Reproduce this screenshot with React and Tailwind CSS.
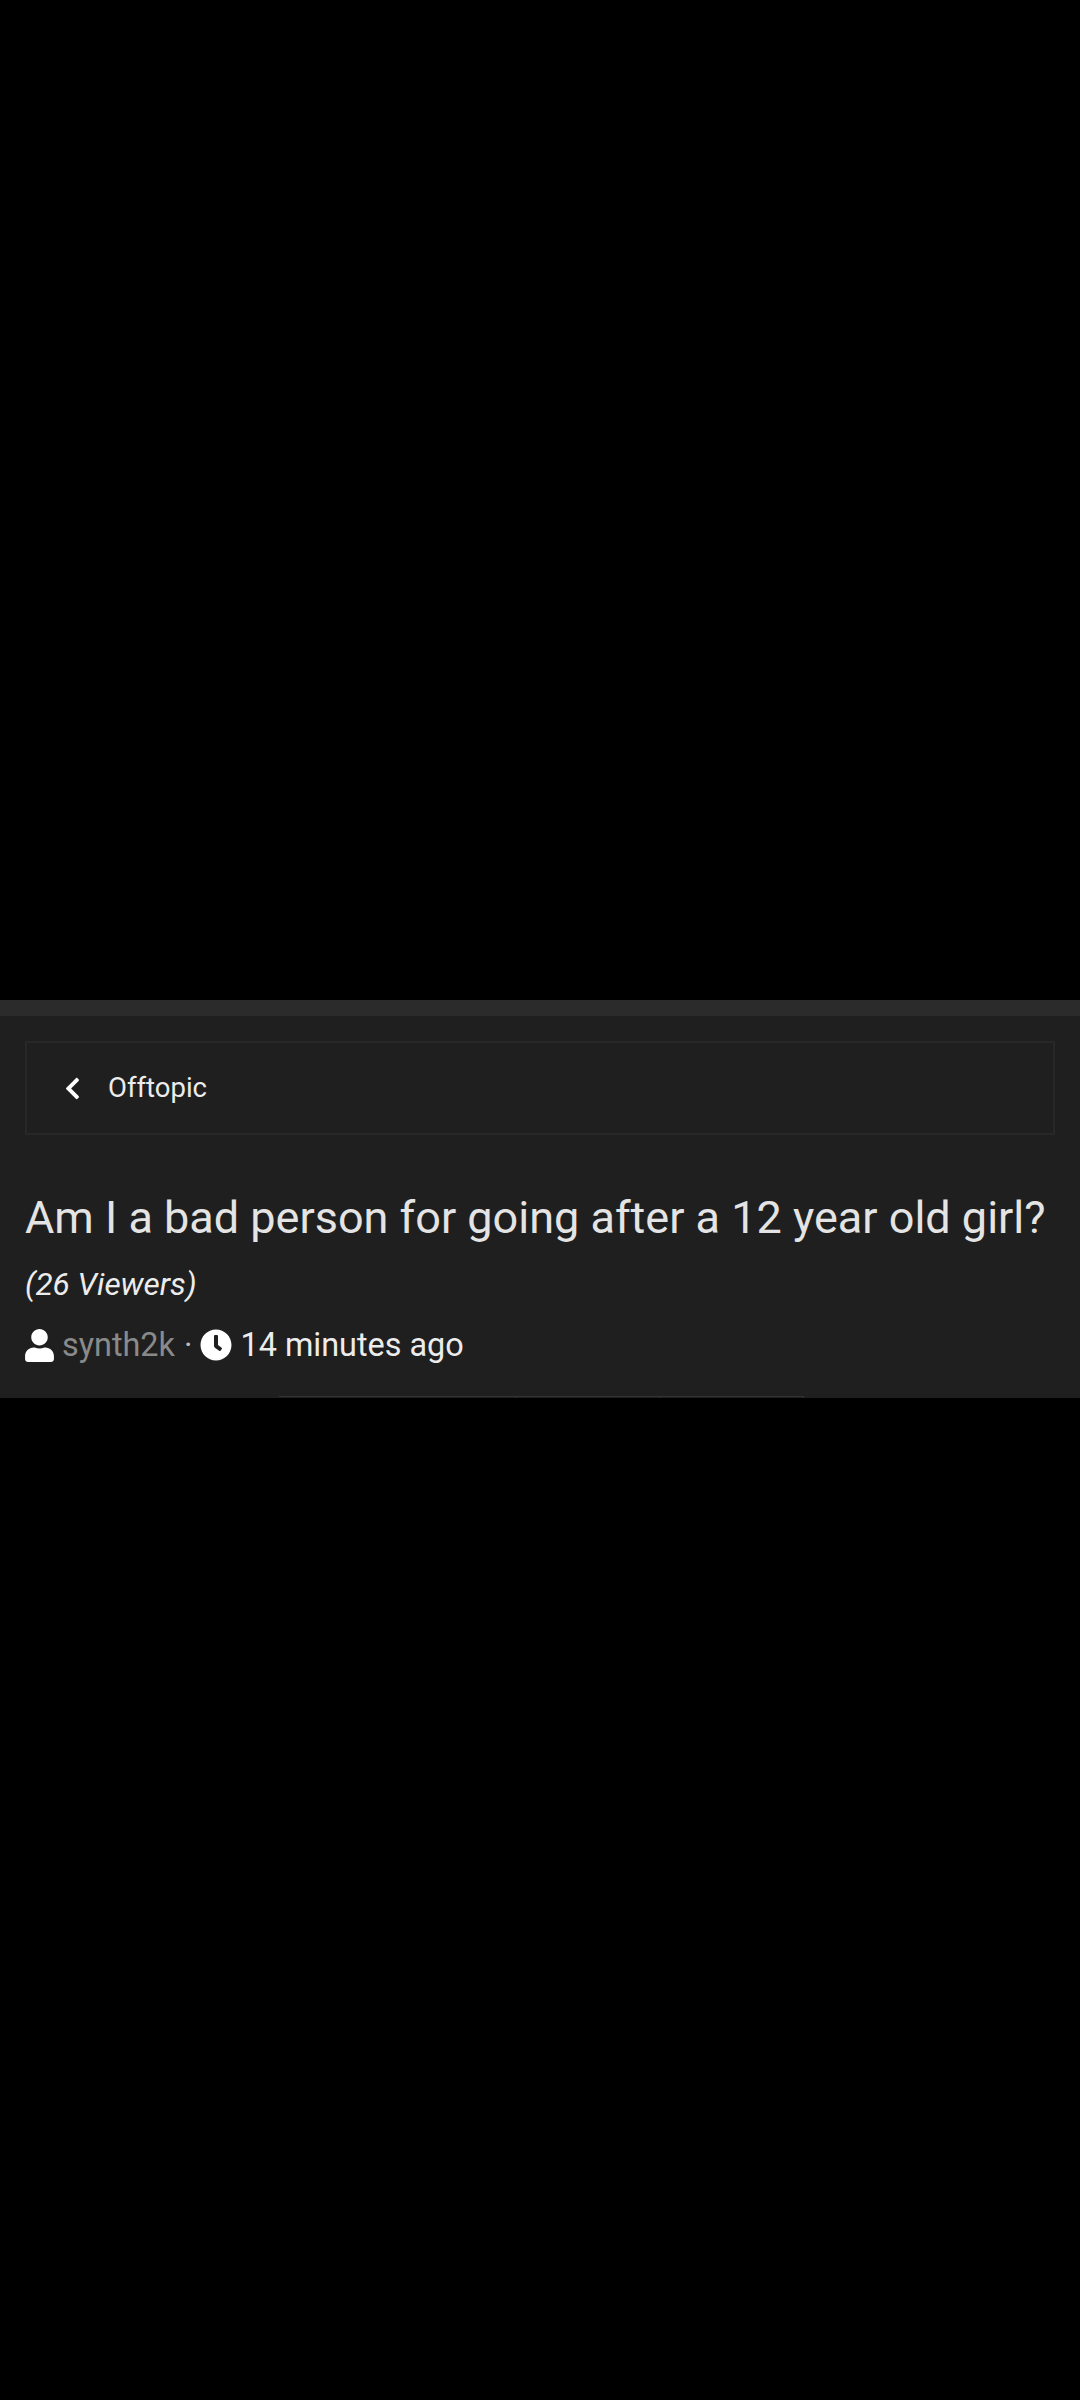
import { FaUser, FaClock, FaChevronLeft } from "react-icons/fa";

// Thread header, sits in the middle of an otherwise black page
function ThreadHeader() {
  return (
    <div className="bg-[#1f1f1f] font-['Roboto',sans-serif]">
      <div className="h-4 bg-[#2b2b2b]" />
      <div className="px-[25px] pt-[25px]">
        <div className="flex h-[94px] items-center border-2 border-[#272727] pl-[33px]">
          <FaChevronLeft className="text-[25px] text-white" />
          <span className="ml-[23px] text-[27.5px] text-[#ececec]">Offtopic</span>
        </div>

        <h1 className="mt-[55px] text-[45px] leading-[56px] font-normal whitespace-nowrap text-[#e4e4e4]">
          Am I a bad person for going after a 12 year old girl?
        </h1>
        <p className="mt-[19px] text-[31.5px] leading-[40px] text-[#ececec] italic">
          (26 Viewers)
        </p>

        <div className="mt-[20px] flex h-[40px] items-center text-[32.4px] text-[#ececec]">
          <FaUser className="-ml-[2px] text-[33px] text-white" />
          <span className="ml-[6px] text-[#8a8a8a]">synth2k</span>
          <span className="ml-[9px] text-[#bdbdbd]">·</span>
          <FaClock className="ml-[8px] text-[32px] text-white" />
          <span className="ml-[8px]">14 minutes ago</span>
        </div>
      </div>

      <div className="mt-[31px] ml-[279px] flex h-[2px]">
        <div className="w-[237px] border-t border-r border-[#333333]" />
        <div className="w-[144px] border-t border-r border-[#333333]" />
        <div className="w-[144px] border-t border-r border-[#333333]" />
      </div>
    </div>
  );
}

export default function App() {
  return (
    <div className="flex min-h-[2400px] flex-col bg-black pt-[1000px]">
      <ThreadHeader />
    </div>
  );
}
